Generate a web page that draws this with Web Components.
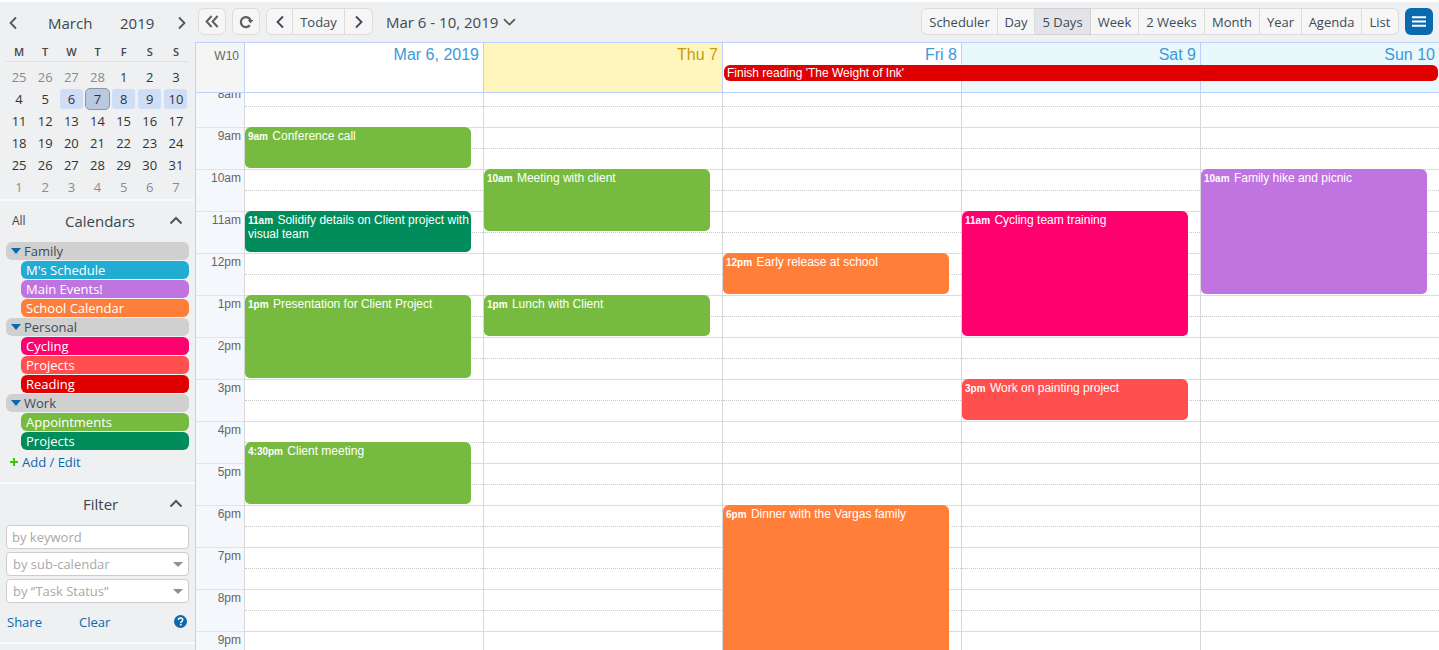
<!DOCTYPE html>
<html>
<head>
<meta charset="utf-8">
<title>Calendar</title>
<style>
    html, body { margin: 0; padding: 0; background: #fff; overflow: hidden; }
    body { width: 1439px; height: 650px; font-family: "Open Sans", sans-serif; }
</style>
</head>
<body>
<app-shell>
    <app-sidebar slot="sidebar"></app-sidebar>
    <app-toolbar slot="toolbar"></app-toolbar>
    <app-week slot="main"></app-week>
</app-shell>

<script>
"use strict";

const CHEVRON_L = `<svg width="10" height="14" viewBox="0 0 10 14"><path d="M8 1.5 2.5 7 8 12.5" fill="none" stroke="currentColor" stroke-width="1.8"/></svg>`;
const CHEVRON_R = `<svg width="10" height="14" viewBox="0 0 10 14"><path d="M2 1.5 7.5 7 2 12.5" fill="none" stroke="currentColor" stroke-width="1.8"/></svg>`;
const CHEVRON_UP = `<svg width="14" height="9" viewBox="0 0 14 9"><path d="M1.5 7.5 7 2l5.5 5.5" fill="none" stroke="currentColor" stroke-width="2"/></svg>`;

class AppShell extends HTMLElement {
    constructor() {
        super();
        this.attachShadow({ mode: "open" });
        this.shadowRoot.innerHTML = `
            <style>
                :host {
                    display: grid;
                    grid-template-columns: 195px 1fr;
                    grid-template-rows: 40px 608px;
                    width: 1439px;
                    height: 650px;
                    padding-top: 2px;
                    box-sizing: border-box;
                    overflow: hidden;
                }
                .side { grid-row: 1 / 3; min-height: 0; }
            </style>
            <div class="side"><slot name="sidebar"></slot></div>
            <slot name="toolbar"></slot>
            <slot name="main"></slot>
        `;
    }
}

class SidePanel extends HTMLElement {
    constructor() {
        super();
        this.attachShadow({ mode: "open" });
        this.shadowRoot.innerHTML = `
            <style>
                :host {
                    display: block;
                    background: #eff0f2;
                    box-sizing: border-box;
                    height: var(--h);
                    margin-bottom: 2px;
                }
            </style>
            <slot></slot>
        `;
    }
}

class MiniCalendar extends HTMLElement {
    constructor() {
        super();
        this.attachShadow({ mode: "open" });
        this.render();
    }

    render() {
        const rows = [
            [25, 26, 27, 28, 1, 2, 3],
            [4, 5, 6, 7, 8, 9, 10],
            [11, 12, 13, 14, 15, 16, 17],
            [18, 19, 20, 21, 22, 23, 24],
            [25, 26, 27, 28, 29, 30, 31],
            [1, 2, 3, 4, 5, 6, 7],
        ];
        const cells = rows.map((row, r) => row.map((d, c) => {
            let cls = "";
            if (r === 0 && c < 4 || r === 5) cls = "other";
            if (r === 1 && c >= 2) cls = c === 3 ? "today" : "sel";
            return `<span class="${cls}">${d}</span>`;
        }).join("")).join("");

        this.shadowRoot.innerHTML = `
            <style>
                :host { display: block; color: #333; font: 13px "Open Sans", sans-serif; }
                .head {
                    display: flex;
                    align-items: center;
                    height: 42px;
                    padding: 0 8px;
                    box-sizing: border-box;
                    font-size: 15px;
                    color: #3b4650;
                }
                .head svg { color: #555; display: block; }
                .month { margin-left: 30px; width: 72px; }
                .year { width: 57px; }
                .dow {
                    display: grid;
                    grid-template-columns: repeat(7, 1fr);
                    margin: 0 6px;
                    height: 17px;
                    border-bottom: 1px solid #dfe0e2;
                    text-align: center;
                    font-size: 11px;
                    font-weight: 600;
                    line-height: 16px;
                    color: #444;
                }
                .days {
                    display: grid;
                    grid-template-columns: repeat(7, 1fr);
                    grid-auto-rows: 22px;
                    margin: 4px 6px 0;
                    text-align: center;
                    line-height: 22px;
                }
                .days span { margin: 1px 1.5px; line-height: 20px; border-radius: 3px; }
                .other { color: #8b8b8b; }
                .sel { background: #cfdef6; }
                .today {
                    background: #b9c9e2;
                    border: 1px solid #8b95a6;
                    border-radius: 5px !important;
                    margin: 0 1px !important;
                }
            </style>
            <div class="head">${CHEVRON_L}<span class="month">March</span><span class="year">2019</span>${CHEVRON_R}</div>
            <div class="dow"><span>M</span><span>T</span><span>W</span><span>T</span><span>F</span><span>S</span><span>S</span></div>
            <div class="days">${cells}</div>
        `;
    }
}

class CalPill extends HTMLElement {
    constructor() {
        super();
        this.attachShadow({ mode: "open" });
        const color = this.getAttribute("color");
        const group = !color;
        this.shadowRoot.innerHTML = `
            <style>
                :host {
                    display: flex;
                    align-items: center;
                    height: 18px;
                    margin: 0 6px 1px ${group ? 6 : 21}px;
                    padding-left: 5px;
                    border-radius: 6px;
                    font: 13px/18px "Open Sans", sans-serif;
                    color: ${group ? "#3e4a55" : "#fff"};
                    background: ${color || "#d0d0d0"};
                }
                i {
                    width: 0;
                    height: 0;
                    border: 5px solid transparent;
                    border-top: 6px solid #0a6aad;
                    border-bottom: 0;
                    margin-right: 3px;
                }
            </style>
            ${group ? "<i></i>" : ""}<slot></slot>
        `;
    }
}

class CalendarList extends HTMLElement {
    constructor() {
        super();
        this.attachShadow({ mode: "open" });
        this.shadowRoot.innerHTML = `
            <style>
                :host { display: block; font: 13px "Open Sans", sans-serif; }
                .head {
                    display: flex;
                    align-items: center;
                    height: 41px;
                    padding: 0 12px 2px;
                    box-sizing: border-box;
                    color: #3b4650;
                    font-size: 15px;
                }
                .all { font-size: 12px; width: 53px; }
                .head svg { color: #555; margin-left: auto; }
                .add { margin: 3px 0 0 10px; color: #0a6aad; display: flex; align-items: center; gap: 4px; line-height: 18px; }
                .add svg { display: block; }
            </style>
            <div class="head"><span class="all">All</span><span>Calendars</span>${CHEVRON_UP}</div>
            <cal-pill>Family</cal-pill>
            <cal-pill color="#21acd4">M's Schedule</cal-pill>
            <cal-pill color="#bf74e0">Main Events!</cal-pill>
            <cal-pill color="#ff7f3a">School Calendar</cal-pill>
            <cal-pill>Personal</cal-pill>
            <cal-pill color="#ff006f">Cycling</cal-pill>
            <cal-pill color="#ff4f4f">Projects</cal-pill>
            <cal-pill color="#e00000">Reading</cal-pill>
            <cal-pill>Work</cal-pill>
            <cal-pill color="#76bb40">Appointments</cal-pill>
            <cal-pill color="#008d5b">Projects</cal-pill>
            <div class="add"><svg width="8" height="8" viewBox="0 0 8 8"><path d="M4 0v8M0 4h8" stroke="#3cc40f" stroke-width="2"/></svg><span>Add / Edit</span></div>
        `;
    }
}

class FilterPanel extends HTMLElement {
    constructor() {
        super();
        this.attachShadow({ mode: "open" });
        const caret = `<i></i>`;
        this.shadowRoot.innerHTML = `
            <style>
                :host { display: block; font: 13px "Open Sans", sans-serif; }
                .head {
                    display: flex;
                    align-items: center;
                    height: 41px;
                    padding: 0 12px 2px 83px;
                    box-sizing: border-box;
                    color: #3b4650;
                    font-size: 15px;
                }
                .head svg { color: #555; margin-left: auto; }
                .field {
                    display: flex;
                    align-items: center;
                    height: 24px;
                    margin: 0 6px 3px;
                    padding: 0 5px 0 6px;
                    box-sizing: border-box;
                    background: #fff;
                    border: 1px solid #ccc;
                    border-radius: 4px;
                    color: #a9a9a9;
                    line-height: 20px;
                }
                .key { padding: 0 5px 1px; }
                .field i {
                    margin-left: auto;
                    border: 5px solid transparent;
                    border-top: 5px solid #8f8f8f;
                    border-bottom: 0;
                }
                .links {
                    display: flex;
                    align-items: center;
                    padding: 7px 7px 0;
                    color: #0a6aad;
                    line-height: 18px;
                }
                .links span:first-child { width: 72px; }
                .links svg { margin-left: auto; display: block; margin-right: 1px; margin-top: -2px; }
            </style>
            <div class="head"><span>Filter</span>${CHEVRON_UP}</div>
            <div class="field key">by keyword</div>
            <div class="field">by sub-calendar${caret}</div>
            <div class="field">by “Task Status”${caret}</div>
            <div class="links"><span>Share</span><span>Clear</span>
                <svg width="13" height="13" viewBox="0 0 13 13"><circle cx="6.5" cy="6.5" r="6.5" fill="#0a6aad"/><path d="M4.4 5c0-1.2 1-1.9 2.1-1.9S8.7 3.8 8.7 5c0 1.5-2 1.4-2 3" fill="none" stroke="#fff" stroke-width="1.5"/><rect x="5.9" y="8.8" width="1.7" height="1.6" fill="#fff"/></svg>
            </div>
        `;
    }
}

class AppSidebar extends HTMLElement {
    constructor() {
        super();
        this.attachShadow({ mode: "open" });
        this.shadowRoot.innerHTML = `
            <style>
                :host { display: block; height: 100%; overflow: hidden; background: #f8f9f9; }
                side-panel:nth-of-type(1) { --h: 197px; }
                side-panel:nth-of-type(2) { --h: 281px; }
                side-panel:nth-of-type(3) { --h: 158px; }
                side-panel:nth-of-type(4) { --h: 40px; }
            </style>
            <side-panel><mini-calendar></mini-calendar></side-panel>
            <side-panel><calendar-list></calendar-list></side-panel>
            <side-panel><filter-panel></filter-panel></side-panel>
            <side-panel></side-panel>
        `;
    }
}

class ToolButton extends HTMLElement {
    constructor() {
        super();
        this.attachShadow({ mode: "open" });
        this.shadowRoot.innerHTML = `
            <style>
                :host {
                    display: flex;
                    align-items: center;
                    justify-content: center;
                    box-sizing: border-box;
                    height: 27px;
                    border: 1px solid #dcdcdc;
                    border-left-width: 0;
                    background: #f6f6f6;
                    color: #3e4a55;
                    font: 13px "Open Sans", sans-serif;
                    white-space: nowrap;
                }
                :host(:first-child) { border-left-width: 1px; border-radius: 6px 0 0 6px; }
                :host(:last-child) { border-radius: 0 6px 6px 0; }
                :host(:only-child) { border-radius: 6px; }
                :host([active]) { background: #e2e4e8; border-color: #d2d2d2; }
            </style>
            <slot></slot>
        `;
    }
}

class AppToolbar extends HTMLElement {
    constructor() {
        super();
        this.attachShadow({ mode: "open" });
        const views = [
            ["Scheduler", 77], ["Day", 37], ["5 Days", 56], ["Week", 48], ["2 Weeks", 66],
            ["Month", 55], ["Year", 42], ["Agenda", 60], ["List", 37],
        ];
        this.shadowRoot.innerHTML = `
            <style>
                :host {
                    display: flex;
                    align-items: center;
                    background: #eff0f2;
                    padding: 0 6px 1px 3px;
                    box-sizing: border-box;
                    height: 40px;
                }
                .group { display: flex; margin-left: 6px; }
                .group:first-of-type { margin-left: 0; }
                .w28 { width: 28px; color: #606060; }
                .date {
                    margin-left: 13px;
                    font-size: 15px;
                    color: #3e4a55;
                    display: flex;
                    align-items: center;
                    gap: 5px;
                }
                .date svg { display: block; color: #555; }
                .views { margin-left: auto; }
                .menu {
                    margin-left: 6px;
                    width: 28px;
                    height: 27px;
                    border-radius: 6px;
                    background: #0a6aad;
                    display: flex;
                    align-items: center;
                    justify-content: center;
                }
                svg { display: block; }
            </style>
            <div class="group">
                <tool-button class="w28"><svg width="14" height="13" viewBox="0 0 14 13"><path d="M6.6 1 1.6 6.5l5 5.5M12.6 1 7.6 6.5l5 5.5" fill="none" stroke="currentColor" stroke-width="2"/></svg></tool-button>
            </div>
            <div class="group">
                <tool-button class="w28"><svg width="14" height="14" viewBox="0 0 14 14"><path d="M10.8 10.2A5 5 0 1 1 11.5 5.2" fill="none" stroke="currentColor" stroke-width="2.2"/><path d="M8.8 5h5.4l-2.7 3.4z" fill="currentColor"/></svg></tool-button>
            </div>
            <div class="group">
                <tool-button style="width:27px">${CHEVRON_L}</tool-button>
                <tool-button style="width:52px">Today</tool-button>
                <tool-button style="width:28px">${CHEVRON_R}</tool-button>
            </div>
            <div class="date"><span>Mar 6 - 10, 2019</span><svg width="13" height="8" viewBox="0 0 13 8"><path d="M1 1.2 6.5 6.6 12 1.2" fill="none" stroke="currentColor" stroke-width="1.7"/></svg></div>
            <div class="group views">
                ${views.map(([t, w]) => `<tool-button style="width:${w}px"${t === "5 Days" ? " active" : ""}>${t}</tool-button>`).join("")}
            </div>
            <div class="menu"><svg width="14" height="11" viewBox="0 0 14 11"><path d="M0 1.2h14M0 5.5h14M0 9.8h14" stroke="#fff" stroke-width="2"/></svg></div>
        `;
    }
}

class CalEvent extends HTMLElement {
    constructor() {
        super();
        this.attachShadow({ mode: "open" });
        const start = parseFloat(this.getAttribute("start"));
        const end = parseFloat(this.getAttribute("end"));
        this.shadowRoot.innerHTML = `
            <style>
                :host {
                    position: absolute;
                    left: 0;
                    width: 226px;
                    top: ${(start - 8) * 42}px;
                    height: ${(end - start) * 42 - 1}px;
                    box-sizing: border-box;
                    padding: 2px 1px 2px 3px;
                    border-radius: 6px 6px 5px 5px;
                    background: ${this.getAttribute("color")};
                    color: #fff;
                    font: 12px/14px "Liberation Sans", Arial, sans-serif;
                    overflow: hidden;
                }
                b { font-size: 10px; line-height: 1; margin-right: 1px; }
            </style>
            <b>${this.getAttribute("time")}</b> <slot></slot>
        `;
    }
}

class AppWeek extends HTMLElement {
    constructor() {
        super();
        this.attachShadow({ mode: "open" });
        this.render();
    }

    render() {
        const hours = ["8am", "9am", "10am", "11am", "12pm", "1pm", "2pm", "3pm", "4pm", "5pm", "6pm", "7pm", "8pm", "9pm"];
        const rows = hours.map(() => `<div class="hour"><i></i></div>`).join("");
        const labels = hours.map(h => `<div class="label">${h}</div>`).join("");
        const green = "#76bb40", orange = "#ff7f3a";
        const events = [
            [
                ["9am", 9, 10, green, "Conference call"],
                ["11am", 11, 12, "#008d5b", "Solidify details on Client project with visual team"],
                ["1pm", 13, 15, green, "Presentation for Client Project"],
                ["4:30pm", 16.5, 18, green, "Client meeting"],
            ],
            [
                ["10am", 10, 11.5, green, "Meeting with client"],
                ["1pm", 13, 14, green, "Lunch with Client"],
            ],
            [
                ["12pm", 12, 13, orange, "Early release at school"],
                ["6pm", 18, 22, orange, "Dinner with the Vargas family"],
            ],
            [
                ["11am", 11, 14, "#ff006f", "Cycling team training"],
                ["3pm", 15, 16, "#ff4f4f", "Work on painting project"],
            ],
            [
                ["10am", 10, 13, "#bf74e0", "Family hike and picnic"],
            ],
        ];
        const cols = events.map(list => `
            <div class="day">${rows}${list.map(([time, s, e, color, text]) =>
                `<cal-event time="${time}" start="${s}" end="${e}" color="${color}">${text}</cal-event>`).join("")}
            </div>`).join("");
        const titles = [
            ["Mar 6, 2019", ""], ["Thu 7", "now"], ["Fri 8", ""], ["Sat 9", "end"], ["Sun 10", "end"],
        ].map(([t, cls], i) => `<div class="title ${cls}" style="grid-column:${i + 2}">${t}</div>`).join("");

        this.shadowRoot.innerHTML = `
            <style>
                :host {
                    display: block;
                    height: 608px;
                    overflow: hidden;
                    border-left: 1px solid #bcd0fb;
                    font: 12px "Liberation Sans", Arial, sans-serif;
                }
                .cols { display: grid; grid-template-columns: 49px 238px repeat(4, 1fr); }
                .head {
                    position: relative;
                    z-index: 1;
                    background: #fff;
                    grid-template-rows: 22px 16px 11px;
                    border-top: 1px solid #bcd0fb;
                    border-bottom: 1px solid #bcd0fb;
                    height: 49px;
                }
                .head > div { grid-row: 1 / 4; }
                .week {
                    grid-column: 1;
                    background: #f5f5f5;
                    border-right: 1px solid #bcd0fb;
                    color: #666;
                    text-align: right;
                    padding: 6px 5px 0 0;
                }
                .title {
                    font-size: 16px;
                    line-height: 23px;
                    text-align: right;
                    padding-right: 4px;
                    color: #3b9ad9;
                    border-left: 1px solid #bcd0fb;
                }
                .title:nth-of-type(2) { border-left: 0; }
                .now { background: #fef6bd; color: #c89a14; }
                .end { background: #e8f8fb; }
                .head > .bar {
                    grid-row: 2;
                    grid-column: 4 / -1;
                    margin: 0 1px 0 2px;
                    height: 16px;
                    background: #e00000;
                    color: #fff;
                    border-radius: 6px;
                    padding-left: 3px;
                    line-height: 17px;
                }
                .scroll { margin-top: -8px; }
                .gutter { background: #f4f8fc; border-right: 1px solid #d8d8d8; }
                .label {
                    height: 42px;
                    box-sizing: border-box;
                    border-top: 1px solid #dde3ee;
                    text-align: right;
                    padding: 1px 3px 0 0;
                    color: #666;
                    font: 12px/14px "Liberation Sans", Arial, sans-serif;
                }
                .day { position: relative; border-left: 1px solid #d8d8d8; }
                .gutter + .day { border-left: 0; }
                .hour { height: 42px; box-sizing: border-box; border-top: 1px solid #dcdcdc; }
                .hour i { display: block; height: 20px; border-bottom: 1px dotted #c8c8c8; }
            </style>
            <div class="cols head">
                <div class="week">W10</div>
                ${titles}
                <div class="bar">Finish reading 'The Weight of Ink'</div>
            </div>
            <div class="cols scroll">
                <div class="gutter">${labels}</div>
                ${cols}
            </div>
        `;
    }
}

customElements.define("side-panel", SidePanel);
customElements.define("mini-calendar", MiniCalendar);
customElements.define("cal-pill", CalPill);
customElements.define("calendar-list", CalendarList);
customElements.define("filter-panel", FilterPanel);
customElements.define("app-sidebar", AppSidebar);
customElements.define("tool-button", ToolButton);
customElements.define("app-toolbar", AppToolbar);
customElements.define("cal-event", CalEvent);
customElements.define("app-week", AppWeek);
customElements.define("app-shell", AppShell);
</script>
</body>
</html>
